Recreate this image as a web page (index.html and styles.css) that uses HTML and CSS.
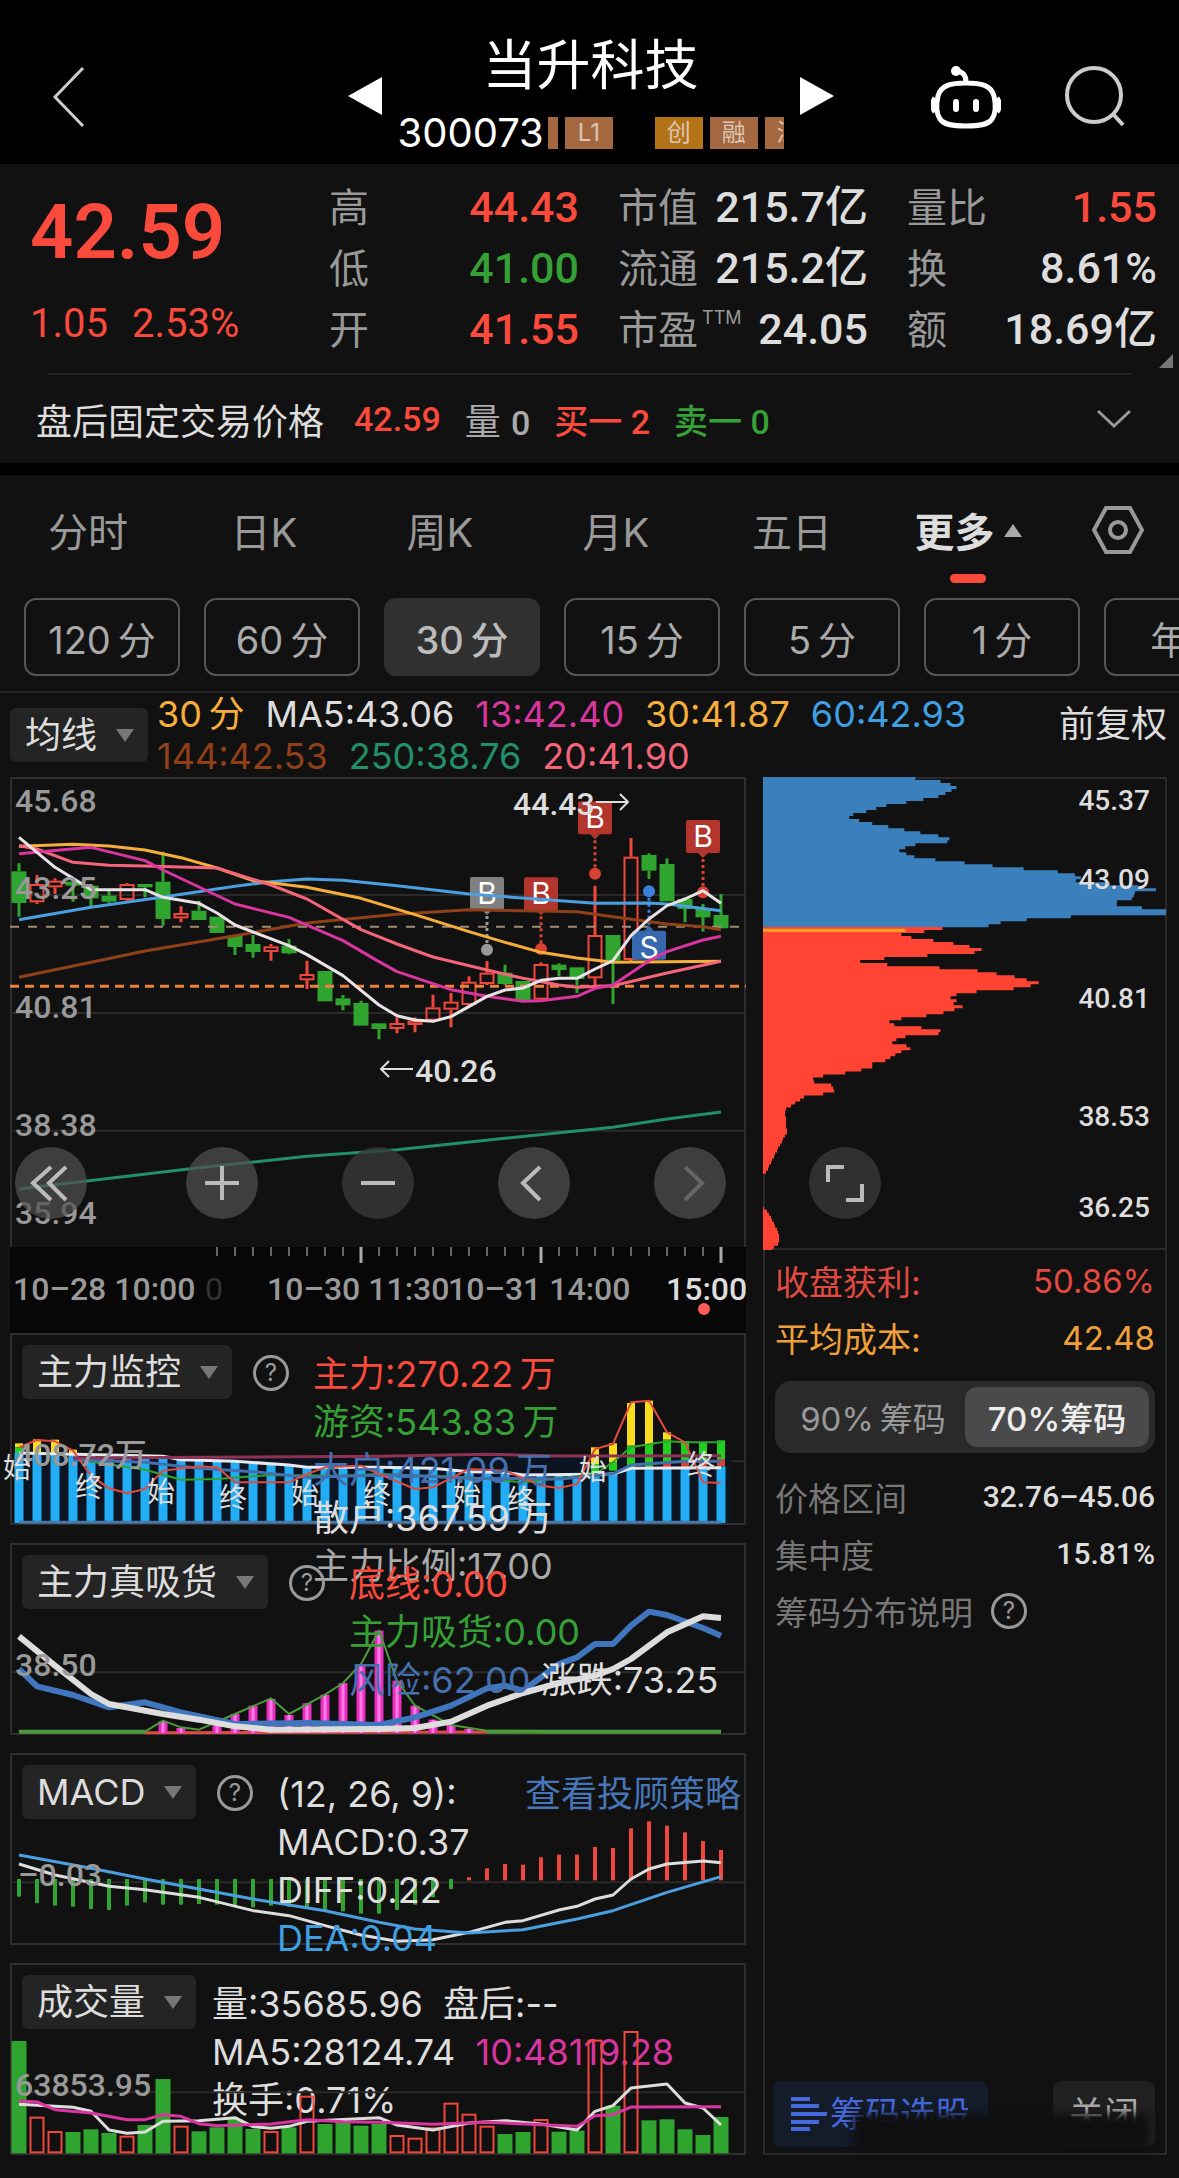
FILE: index.html
```html
<!DOCTYPE html>
<html lang="zh-CN">
<head>
    <meta charset="utf-8">
    <meta name="viewport" content="width=device-width, initial-scale=1">
    <title>当升科技 300073</title>
    <link rel="stylesheet" href="styles.css">
</head>
<body>
    <header class="topbar">
        <button class="icon-btn back" aria-label="返回">
            <svg width="36" height="64" viewBox="0 0 36 64"><path d="M31 3 3 32l28 29" /></svg>
        </button>
        <div class="stock">
            <button class="icon-btn" aria-label="上一只"><svg width="34" height="38" viewBox="0 0 34 38"><path class="solid" d="M34 0v38L0 19z" /></svg></button>
            <div class="stock-name">
                <h1>当升科技</h1>
                <div class="code">
                    <span>300073</span>
                    <div class="tags">
                        <i class="tag cut"></i><i class="tag">L1</i><i class="tag gold">创</i><i class="tag">融</i><i class="tag">深</i>
                    </div>
                </div>
            </div>
            <button class="icon-btn" aria-label="下一只"><svg width="34" height="38" viewBox="0 0 34 38"><path class="solid" d="M0 0v38l34-19z" /></svg></button>
        </div>
        <div class="tools">
            <button class="icon-btn" aria-label="助手">
                <svg width="70" height="66" viewBox="0 0 70 66">
                    <path class="thick" d="M35 19c15 0 25 2 28 13 2 9 2 17-2 23-4 6-13 7-26 7s-22-1-26-7c-4-6-4-14-2-23 3-11 13-13 28-13zM35 18c0-7-3-10-9-11" />
                    <circle class="solid" cx="25" cy="7" r="5" />
                    <path class="thick" d="M4 34c-3 4-3 10 0 14M66 34c3 4 3 10 0 14" />
                    <rect class="solid" x="22" y="35" width="6" height="13" rx="3" /><rect class="solid" x="42" y="35" width="6" height="13" rx="3" />
                </svg>
            </button>
            <button class="icon-btn" aria-label="搜索">
                <svg width="66" height="66" viewBox="0 0 66 66"><circle cx="31" cy="31" r="27" /><path d="m50 50 10 11" /></svg>
            </button>
        </div>
    </header>

    <section class="quote">
        <div class="stats">
            <div class="price red">
                <strong>42.59</strong>
                <p><span>1.05</span><span>2.53%</span></p>
            </div>
            <dl>
                <div><dt>高</dt><dd class="red">44.43</dd></div>
                <div><dt>低</dt><dd class="green">41.00</dd></div>
                <div><dt>开</dt><dd class="red">41.55</dd></div>
            </dl>
            <dl>
                <div><dt>市值</dt><dd>215.7亿</dd></div>
                <div><dt>流通</dt><dd>215.2亿</dd></div>
                <div><dt>市盈<sup>TTM</sup></dt><dd>24.05</dd></div>
            </dl>
            <dl>
                <div><dt>量比</dt><dd class="red">1.55</dd></div>
                <div><dt>换</dt><dd>8.61%</dd></div>
                <div><dt>额</dt><dd>18.69亿</dd></div>
            </dl>
        </div>
        <div class="after">
            <span>盘后固定交易价格</span>
            <b class="red">42.59</b>
            <span class="dim">量 <b>0</b></span>
            <b class="red">买一 2</b>
            <b class="green">卖一 0</b>
            <button class="icon-btn expand" aria-label="展开"><svg width="34" height="20" viewBox="0 0 34 20"><path d="m1 2 16 15L33 2" /></svg></button>
        </div>
    </section>

    <nav class="tabs">
        <button>分时</button>
        <button>日K</button>
        <button>周K</button>
        <button>月K</button>
        <button>五日</button>
        <button class="on">更多<i></i></button>
        <button aria-label="设置">
            <svg width="54" height="50" viewBox="0 0 54 50"><path d="M15 3h24l12 22-12 22H15L3 25z" /><circle cx="27" cy="25" r="8" /></svg>
        </button>
    </nav>
    <div class="periods">
        <button>120&thinsp;分</button>
        <button>60&thinsp;分</button>
        <button class="on">30&thinsp;分</button>
        <button>15&thinsp;分</button>
        <button>5&thinsp;分</button>
        <button>1&thinsp;分</button>
        <button>年K</button>
    </div>

    <div class="ma">
        <label class="pick"><select aria-label="主图指标"><option>均线</option></select></label>
        <div class="ma-values">
            <p><span class="c-yellow">30&thinsp;分</span><span>MA5:43.06</span><span class="c-pink">13:42.40</span><span class="c-yellow">30:41.87</span><span class="c-blue">60:42.93</span></p>
            <p><span class="c-brown">144:42.53</span><span class="c-teal">250:38.76</span><span class="c-rose">20:41.90</span></p>
        </div>
        <button class="adjust">前复权</button>
    </div>

    <main class="board">
        <div class="charts">
            <div class="kline">
                <svg id="kline" viewBox="0 0 736 470"></svg>
                <div class="controls">
                    <button aria-label="更早"><svg viewBox="0 0 72 72"><path d="M36 20 18 36l18 17M51 20 34 36l17 17" /></svg></button>
                    <button aria-label="放大"><svg viewBox="0 0 72 72"><path d="M19 36h34M36 19v34" /></svg></button>
                    <button class="faint" aria-label="缩小"><svg viewBox="0 0 72 72"><path d="M19 36h34" /></svg></button>
                    <button aria-label="左移"><svg viewBox="0 0 72 72"><path d="M42 20 25 36l17 17" /></svg></button>
                    <button class="off" aria-label="右移"><svg viewBox="0 0 72 72"><path d="m31 20 17 16-17 17" /></svg></button>
                </div>
            </div>
            <svg id="axis" class="axis" viewBox="0 0 736 86"></svg>

            <section class="panel">
                <svg id="monitor" viewBox="0 0 736 192"></svg>
                <div class="head">
                    <label class="pick"><select aria-label="副图一"><option>主力监控</option></select></label>
                    <button class="help" aria-label="说明">?</button>
                    <div class="legend">
                        <p class="red">主力:270.22&thinsp;万</p>
                        <p class="green">游资:543.83&thinsp;万</p>
                        <p class="c-navy">大户:421.09&thinsp;万</p>
                        <p>散户:367.59&thinsp;万</p>
                        <p class="dim">主力比例:17.00</p>
                    </div>
                </div>
            </section>
            <section class="panel">
                <svg id="absorb" viewBox="0 0 736 192"></svg>
                <div class="head">
                    <label class="pick"><select aria-label="副图二"><option>主力真吸货</option></select></label>
                    <button class="help" aria-label="说明">?</button>
                    <div class="legend">
                        <p class="red">底线:0.00</p>
                        <p class="green">主力吸货:0.00</p>
                        <p><span class="c-navy">风险:62.00</span> 涨跌:73.25</p>
                    </div>
                </div>
            </section>
            <section class="panel">
                <svg id="macd" viewBox="0 0 736 192"></svg>
                <div class="head">
                    <label class="pick"><select aria-label="副图三"><option>MACD</option></select></label>
                    <button class="help" aria-label="说明">?</button>
                    <div class="legend">
                        <p>(12, 26, 9):</p>
                        <p>MACD:0.37</p>
                        <p>DIFF:0.22</p>
                        <p class="c-blue">DEA:0.04</p>
                    </div>
                    <a class="strategy" href="#strategy">查看投顾策略</a>
                </div>
            </section>
            <section class="panel front">
                <svg id="volume" viewBox="0 0 736 192"></svg>
                <div class="head">
                    <label class="pick"><select aria-label="副图四"><option>成交量</option></select></label>
                    <div class="legend">
                        <p>量:35685.96&nbsp; 盘后:--</p>
                        <p>MA5:28124.74&nbsp; <span class="c-pink">10:48119.28</span></p>
                        <p>换手:0.71%</p>
                    </div>
                </div>
            </section>
        </div>

        <aside class="chips">
            <div class="chip-map">
                <svg id="chips" viewBox="0 0 403 472"></svg>
                <button class="zoom" aria-label="全屏"><svg viewBox="0 0 72 72"><path d="M19 35V20h16M37 53h16V37" /></svg></button>
            </div>
            <div class="chip-info">
                <p class="big red"><span>收盘获利:</span><span>50.86%</span></p>
                <p class="big c-orange"><span>平均成本:</span><span>42.48</span></p>
                <div class="segment">
                    <button>90%&thinsp;筹码</button>
                    <button class="on">70%筹码</button>
                </div>
                <p><span>价格区间</span><b>32.76–45.06</b></p>
                <p><span>集中度</span><b>15.81%</b></p>
                <p><span>筹码分布说明</span><button class="help" aria-label="说明">?</button></p>
            </div>
            <div class="chip-foot">
                <button class="pick-stock">
                    <svg width="36" height="34" viewBox="0 0 36 34"><path d="M0 2h19M0 9h28M0 17h36M0 25h28M0 32h19" /></svg>筹码选股
                </button>
                <button class="close">关闭</button>
                <div class="fade"></div>
            </div>
        </aside>
    </main>

    <script src="script.js"></script>
</body>
</html>
```

FILE: styles.css
```css
* {
    box-sizing: border-box;
    margin: 0;
    padding: 0;
}
body {
    background: #111;
    color: #ddd;
    font-family: Inter, "Noto Sans CJK SC", sans-serif;
    font-size: 36px;
    overflow-x: hidden;
}
button, select {
    font: inherit;
    color: inherit;
    background: none;
    border: 0;
    cursor: pointer;
}
svg {
    display: block;
    fill: none;
    stroke: currentColor;
    stroke-width: 3;
}
.red { color: #fa4a3c; }
.green { color: #35a035; }
.dim { color: #aaa; }
.c-yellow { color: #f5ae3c; }
.c-pink { color: #d9359f; }
.c-blue { color: #3f9fe0; }
.c-navy { color: #466fae; }
.c-brown { color: #8f4018; }
.c-teal { color: #219068; }
.c-rose { color: #f4647a; }
.c-orange { color: #f7a437; }

/* top bar */
.topbar {
    display: grid;
    grid-template-columns: 1fr auto 1fr;
    align-items: start;
    padding: 32px 50px 12px 52px;
    background: #000;
    color: #fff;
}
.icon-btn {
    display: flex;
}
.icon-btn .solid {
    fill: currentColor;
    stroke: none;
}
.icon-btn .thick {
    stroke-width: 5;
}
.back {
    margin-top: 33px;
    color: #ccc;
}
.stock {
    display: flex;
    align-items: center;
    gap: 16px;
}
.stock .icon-btn {
    padding-top: 8px;
}
.stock-name {
    width: 386px;
}
h1 {
    font-size: 54px;
    font-weight: 400;
    line-height: 68px;
    text-align: center;
}
.code {
    display: flex;
    align-items: center;
    gap: 4px;
    margin-top: 14px;
    font-size: 40px;
    line-height: 38px;
}
.tags {
    display: flex;
    flex: 1;
    gap: 7px;
    overflow: hidden;
}
.tag {
    flex: none;
    width: 48px;
    background: #a3683f;
    color: #ddc5b3;
    font-size: 24px;
    font-style: normal;
    line-height: 32px;
    text-align: center;
}
.tag.cut {
    width: 10px;
}
.tag.gold {
    margin-left: 35px;
    background: #b57318;
}
.tools {
    display: flex;
    justify-content: flex-end;
    gap: 62px;
    margin-top: 32px;
}
.tools button:last-child {
    color: #ccc;
}
.tools button:last-child svg {
    stroke-width: 4;
}

/* quote */
.quote {
    position: relative;
    border-bottom: 12px solid #000;
}
.quote::after {
    content: "";
    position: absolute;
    right: 6px;
    top: 190px;
    border-left: 14px solid transparent;
    border-bottom: 14px solid #777;
}
.stats {
    display: grid;
    grid-template-columns: 259fr 249fr 249fr 249fr;
    gap: 39px;
    padding: 13px 22px 13px 30px;
}
.price {
    font-family: Roboto, "Noto Sans CJK SC", sans-serif;
    font-size: 40px;
    line-height: 73px;
}
.price strong {
    display: block;
    font-size: 76px;
    font-weight: 600;
    line-height: 110px;
}
.price p {
    display: flex;
    gap: 24px;
}
dl > div {
    display: flex;
    justify-content: space-between;
    line-height: 61px;
    font-size: 40px;
    white-space: nowrap;
}
dt {
    color: #999;
}
dt sup {
    font-size: 18px;
    line-height: 18px;
    vertical-align: 20px;
    margin-left: 4px;
}
dd {
    font-family: Roboto, "Noto Sans CJK SC", sans-serif;
    font-size: 43px;
    font-weight: 500;
}
.after {
    display: flex;
    align-items: center;
    gap: 24px;
    height: 90px;
    margin: 0 48px;
    border-top: 2px solid #222;
    white-space: nowrap;
}
.after > span:first-child {
    margin: 0 6px 0 -12px;
}
.after b {
    font-family: Roboto, "Noto Sans CJK SC", sans-serif;
    font-weight: 500;
    font-size: 34px;
}
.expand {
    margin-left: auto;
    color: #999;
}

/* tabs */
.tabs {
    display: grid;
    grid-template-columns: repeat(6, 176fr) 123fr;
    height: 110px;
    font-size: 40px;
    color: #999;
}
.tabs button {
    position: relative;
    display: flex;
    align-items: center;
    justify-content: center;
}
.tabs svg {
    stroke-width: 4;
}
.tabs .on {
    color: #ddd;
    font-weight: 700;
}
.tabs i {
    margin-left: 9px;
    border: 9px solid transparent;
    border-top: 0;
    border-bottom: 13px solid #aaa;
}
.tabs .on::after {
    content: "";
    position: absolute;
    bottom: 2px;
    width: 36px;
    height: 9px;
    border-radius: 5px;
    background: #fa4a3c;
}
.periods {
    display: flex;
    gap: 24px;
    padding: 13px 0 15px 24px;
    overflow: hidden;
    border-bottom: 2px solid #222;
}
.periods button {
    flex: none;
    width: 156px;
    height: 78px;
    border: 2px solid #555;
    border-radius: 12px;
    color: #aaa;
    font-size: 38px;
}
.periods .on {
    border-color: #303030;
    background: #303030;
    color: #bbb;
    font-weight: 500;
}

/* main indicator row */
.ma {
    display: flex;
    align-items: center;
    height: 84px;
    padding: 0 12px 0 10px;
}
.ma-values {
    flex: 1;
    margin-left: 9px;
    line-height: 42px;
    white-space: nowrap;
}
.ma-values p {
    display: flex;
    gap: 21px;
}
.adjust {
    margin-bottom: 28px;
}
.pick {
    position: relative;
    flex: none;
    height: 54px;
    border-radius: 6px;
    background: #242424;
}
.pick select {
    appearance: none;
    height: 54px;
    padding: 0 50px 0 15px;
}
.pick::after {
    content: "";
    position: absolute;
    right: 14px;
    top: 21px;
    border: 9px solid transparent;
    border-top: 13px solid #777;
    border-bottom: 0;
    pointer-events: none;
}

/* charts */
.board {
    display: grid;
    grid-template-columns: 736fr 404fr;
    gap: 17px;
    padding: 0 12px 22px 10px;
}
.charts text, .chips text {
    stroke: none;
    fill: #ddd;
    font-family: Roboto, "Noto Sans CJK SC", sans-serif;
    font-size: 32px;
}
.charts svg .scale {
    fill: #999;
    font-weight: 500;
}
.charts svg .flag {
    fill: #fff;
    font-family: Inter, sans-serif;
    font-size: 30px;
    text-anchor: middle;
}
.charts svg .mark {
    font-size: 28px;
    text-anchor: middle;
}
.charts svg .strong {
    font-weight: 500;
}
.charts svg .ghost {
    fill: #333;
}
.kline, .panel, .chip-map {
    position: relative;
}
.kline {
    box-shadow: inset 0 2px #2e2e2e, inset 2px 0 #2e2e2e, inset -2px 0 #2e2e2e;
}
.axis {
    background: #070707;
}
.controls {
    position: absolute;
    left: 5px;
    top: 370px;
    display: flex;
    gap: 84px;
}
.controls button, .zoom {
    width: 72px;
    height: 72px;
    border-radius: 50%;
    background: rgba(80, 80, 80, .72);
    color: #bbb;
}
.controls svg, .zoom svg {
    stroke-width: 4;
}
.controls button:first-child {
    margin-right: 15px;
}
.controls .faint, .zoom {
    background: rgba(56, 56, 56, .8);
}
.controls .off {
    color: #666;
}
.panel {
    box-shadow: inset 0 0 0 2px #2e2e2e;
}
.panel + .panel {
    margin-top: 18px;
}
.panel > svg {
    position: relative;
    overflow: visible;
}
.panel.front > svg {
    z-index: 1;
    pointer-events: none;
}
.head {
    position: absolute;
    left: 12px;
    right: 5px;
    top: 12px;
    display: flex;
    align-items: flex-start;
    white-space: nowrap;
}
.help {
    flex: none;
    width: 36px;
    height: 36px;
    border: 3px solid #999;
    border-radius: 50%;
    color: #999;
    font-size: 24px;
    line-height: 30px;
}
.head .help {
    margin: 10px 24px 0 21px;
}
.legend {
    line-height: 48px;
    margin-top: 5px;
}
.pick + .legend {
    margin-left: 16px;
}
.strategy {
    margin: 5px 0 0 auto;
    color: #4676b8;
    line-height: 48px;
    text-decoration: none;
}

/* chip distribution */
.chips {
    display: flex;
    flex-direction: column;
    box-shadow: inset 0 0 0 2px #2a2a2a;
}
.chip-map {
    box-shadow: inset 0 -2px #2a2a2a;
}
.chips text {
    font-size: 28px;
    font-weight: 500;
    text-anchor: end;
}
.zoom {
    position: absolute;
    left: 46px;
    top: 370px;
}
.chip-info {
    padding: 2px 12px 0;
    color: #777;
    font-size: 33px;
}
.chip-info p {
    display: flex;
    align-items: center;
    justify-content: space-between;
    height: 57px;
}
.chip-info .big {
    font-size: 34px;
}
.chip-info .red { color: #e04a40; }
.chip-info .c-orange { color: #f0a03a; }
.chip-info .big span:last-child {
    font-size: 33px;
}
.chip-info p:last-child {
    justify-content: flex-start;
    gap: 18px;
}
.chip-info b {
    color: #ddd;
    font-family: Roboto, sans-serif;
    font-size: 30px;
    font-weight: 500;
}
.segment {
    display: grid;
    grid-template-columns: 1fr 1fr;
    height: 72px;
    margin: 15px 0;
    padding: 6px;
    border-radius: 16px;
    background: #2a2a2a;
    color: #999;
    font-size: 33px;
    white-space: nowrap;
}
.segment .on {
    border-radius: 12px;
    background: #4a4a4a;
    color: #eee;
    font-weight: 500;
}
.chip-foot {
    position: relative;
    display: flex;
    justify-content: space-between;
    margin-top: auto;
    padding: 0 12px 8px 10px;
}
.chip-foot button {
    display: flex;
    align-items: center;
    height: 66px;
    border-radius: 8px;
    font-size: 35px;
    line-height: 48px;
}
.pick-stock {
    gap: 3px;
    padding: 0 18px;
    background: #141b29;
    color: #4568dc;
}
.pick-stock svg {
    stroke-width: 4;
}
.close {
    padding: 0 16px;
    background: #202020;
    color: #aaa;
}
.fade {
    position: absolute;
    left: 90px;
    right: 18px;
    bottom: 5px;
    height: 36px;
    background: #0f0f10;
    filter: blur(4px);
}
```

FILE: script.js
```javascript
const NS = "http://www.w3.org/2000/svg";
const GREEN = "#2fa52f";
const RED = "#f0473c";

function add(svg, tag, attrs, text) {
    const el = document.createElementNS(NS, tag);
    for (const key in attrs) el.setAttribute(key, attrs[key]);
    if (text) el.textContent = text;
    svg.appendChild(el);
    return el;
}

// one slot every 18px, plot heights are on a 3x grid
const x = i => 9 + 18 * i;
const grid = top => v => (v - top) / 3;

function line(svg, y, pts, color, width) {
    const d = pts.map(p => x(p[0]) + "," + y(p[1])).join(" ");
    add(svg, "polyline", { points: d, stroke: color, "stroke-width": width || 2, "stroke-linejoin": "round" });
}

function bar(svg, i, top, bottom, width, color, hollow) {
    const w = hollow ? width - 2 : width;
    add(svg, "rect", {
        x: x(i) - w / 2, y: hollow ? top + 1 : top, width: w,
        height: Math.max(bottom - top - (hollow ? 2 : 0), 2),
        fill: hollow ? "none" : color, stroke: hollow ? color : "none", "stroke-width": 2
    });
}

function rule(svg, y, attrs) {
    add(svg, "path", Object.assign({ d: "M0 " + y + "H736", stroke: "#2a2a2a", "stroke-width": 2 }, attrs));
}

// ---- candles: [up, high, top, bottom, low]
const candles = [
    [0, 283, 307, 402, 443], [1, 318, 345, 400, 405], [1, 328, 335, 355, 375], [0, 330, 338, 350, 398],
    [0, 345, 350, 388, 415], [0, 360, 380, 398, 403], [1, 342, 345, 393, 395], [0, 345, 345, 355, 385],
    [0, 248, 338, 450, 470], [1, 412, 432, 448, 460], [0, 395, 425, 453, 453], [0, 443, 443, 492, 492],
    [0, 500, 500, 534, 558], [0, 498, 525, 549, 566], [1, 525, 532, 549, 575], [0, 510, 530, 553, 556],
    [1, 575, 615, 634, 660], [0, 606, 606, 697, 697], [0, 678, 688, 709, 724], [0, 695, 702, 770, 770],
    [0, 763, 763, 780, 811], [1, 745, 762, 780, 793], [1, 745, 755, 768, 790], [1, 677, 715, 755, 760],
    [1, 672, 698, 722, 775], [1, 622, 638, 708, 712], [1, 576, 611, 645, 648], [0, 587, 611, 645, 648],
    [0, 636, 636, 695, 697], [1, 580, 585, 692, 695], [0, 583, 587, 603, 622], [0, 595, 595, 630, 672],
    [1, 350, 498, 628, 655], [0, 498, 498, 575, 705], [1, 207, 263, 573, 577], [0, 253, 258, 305, 330],
    [0, 268, 285, 397, 397], [0, 385, 390, 420, 460], [0, 405, 420, 445, 488], [0, 375, 438, 478, 478]
];

function drawKline() {
    const svg = document.getElementById("kline");
    const y = grid(24);
    [378, 732, 1085].forEach(v => rule(svg, y(v)));
    candles.forEach((c, i) => {
        const color = c[0] ? RED : GREEN;
        add(svg, "path", { d: `M${x(i)} ${y(c[1])}V${y(c[2])}M${x(i)} ${y(c[3])}V${y(c[4])}`, stroke: color });
        bar(svg, i, y(c[2]), y(c[3]), 15, color, c[0]);
    });
    rule(svg, y(473), { stroke: "#a08c70", "stroke-dasharray": "9 9" });
    rule(svg, y(652), { stroke: "#ee8040", "stroke-width": 3, "stroke-dasharray": "9 6" });

    flag(svg, y, 26, 324, 542, "B", "#808080");
    flag(svg, y, 29, 325, 540, "B", "#b3352b");
    flag(svg, y, 32, 97, 314, "B", "#b3352b");
    flag(svg, y, 38, 153, 370, "B", "#b3352b");
    flag(svg, y, 35, 485, 367, "S", "#3568ae");

    line(svg, y, [[0, 1260], [10, 1196], [16, 1162], [21, 1142], [27, 1108], [33, 1075], [36, 1050], [39, 1029]], "#219068", 3);
    line(svg, y, [[0, 625], [7, 546], [12, 500], [16, 462], [21, 436], [25, 422], [31, 428], [33, 443], [36, 465], [38, 473], [39, 482]], "#8f4018", 3);
    line(svg, y, [[0, 452], [4, 415], [8, 384], [12, 352], [14, 338], [16, 330], [18, 334], [21, 350], [25, 375], [32, 403], [35, 402], [36, 405], [39, 425]], "#4a9fe0", 3);
    line(svg, y, [[0, 232], [3, 226], [5, 231], [7, 243], [9, 266], [11, 297], [13, 335], [16, 355], [19, 388], [22, 437], [25, 488], [27, 520], [29, 550], [31, 567], [33, 580], [39, 577]], "#f5ae3c", 3);
    line(svg, y, [[0, 230], [1, 240], [3, 280], [5, 289], [7, 291], [11, 297], [14, 348], [16, 390], [19, 482], [21, 525], [23, 564], [26, 603], [28, 628], [30, 648], [31, 655], [33, 650], [36, 612], [39, 577]], "#f4647a", 3);
    line(svg, y, [[0, 254], [4, 235], [7, 275], [8, 303], [12, 405], [15, 445], [18, 515], [20, 578], [21, 608], [24, 662], [26, 682], [28, 697], [29, 695], [31, 682], [32, 658], [33, 648], [35, 575], [36, 548], [38, 513], [39, 502]], "#d9359f", 3);
    line(svg, y, [[0, 205], [1, 250], [2, 295], [3, 328], [4, 362], [7, 362], [8, 385], [10, 403], [11, 432], [12, 468], [15, 530], [16, 557], [18, 620], [20, 708], [21, 740], [22, 753], [23, 757], [24, 743], [26, 682], [27, 663], [28, 657], [29, 634], [30, 628], [31, 628], [32, 600], [33, 575], [34, 500], [35, 450], [36, 410], [37, 390], [38, 365], [39, 403]], "#e8e2e6", 3);

    [["45.68", 35], ["43.25", 122], ["40.81", 241], ["38.38", 359], ["35.94", 447]].forEach(t =>
        add(svg, "text", { x: 5, y: t[1], class: "scale" }, t[0]));
    add(svg, "text", { x: 503, y: 38, class: "strong" }, "44.43");
    add(svg, "path", { d: "M586 25h32M610 17l8 8-8 8", stroke: "#ddd", "stroke-width": 2 });
    add(svg, "text", { x: 405, y: 305, class: "strong" }, "40.26");
    add(svg, "path", { d: "M403 292h-32M379 284l-8 8 8 8", stroke: "#ddd", "stroke-width": 2 });
}

function flag(svg, y, i, top, dot, text, color) {
    const t = y(top), d = y(dot), cx = x(i);
    const bright = color === "#b3352b" ? "#d8402f" : color === "#808080" ? "#999" : "#3c80dd";
    const from = d > t ? t + 33 : t;
    add(svg, "path", { d: `M${cx} ${from}V${d}`, stroke: bright, "stroke-dasharray": "3 3" });
    add(svg, "circle", { cx: cx, cy: d, r: 6, fill: bright, stroke: "none" });
    add(svg, "rect", { x: cx - 17, y: t, width: 34, height: d > t ? 33 : 29, rx: 2, fill: color, stroke: "none" });
    const tip = d > t ? `M${cx - 5} ${t + 33}h10l-5 5z` : `M${cx - 5} ${t}h10l-5-5z`;
    add(svg, "path", { d: tip, fill: color, stroke: "none" });
    add(svg, "text", { x: cx, y: t + 27, class: "flag" }, text);
}

function drawAxis() {
    const svg = document.getElementById("axis");
    for (let i = 11; i < 40; i++) {
        const major = i % 10 === 9;
        add(svg, "path", { d: `M${x(i)} 0V${major ? 16 : 9}`, stroke: major ? "#aaa" : "#666", "stroke-width": major ? 3 : 2 });
    }
    add(svg, "text", { x: 195, y: 53, class: "ghost" }, "0");
    add(svg, "text", { x: 3, y: 53, class: "scale" }, "10–28 10:00");
    add(svg, "text", { x: 257, y: 53, class: "scale" }, "10–30 11:30");
    add(svg, "text", { x: 438, y: 53, class: "scale" }, "10–31 14:00");
    add(svg, "text", { x: 656, y: 53, class: "strong" }, "15:00");
    add(svg, "circle", { cx: 694, cy: 62, r: 6, fill: "#ff5a55", stroke: "none" });
}

function drawMonitor() {
    const svg = document.getElementById("monitor");
    const y = grid(312);
    rule(svg, y(697));
    const body = [672, 674, 672, 674, 676, 677, 679, 680, 682, 692, 694, 696, 697, 700, 704, 708, 715, 715, 715, 715, 715, 716, 717, 718, 723, 728, 729, 730, 738, 738, 737, 736, 735, 730, 716, 714, 714, 714, 714, 712];
    add(svg, "rect", { x: 5, y: 124, width: 716, height: 66, fill: "#0b1420", stroke: "none" });
    body.forEach((v, i) => bar(svg, i, y(v), y(882), 9, "#21adf5"));
    const caps = [
        [0, 643, 655, "#fadc1e"], [0, 655, 672, "#1fd01f"], [1, 631, 672, "#fadc1e"], [2, 632, 672, "#fadc1e"], [3, 662, 674, "#fadc1e"],
        [32, 655, 705, "#fadc1e"], [32, 705, 735, "#1fd01f"], [33, 643, 700, "#fadc1e"], [33, 700, 725, "#1fd01f"],
        [34, 522, 650, "#fadc1e"], [34, 650, 716, "#1fd01f"], [35, 515, 645, "#fadc1e"], [35, 645, 716, "#1fd01f"],
        [36, 610, 632, "#fadc1e"], [36, 632, 700, "#1fd01f"], [37, 636, 700, "#1fd01f"], [38, 640, 700, "#1fd01f"], [39, 634, 690, "#1fd01f"],
        [36, 700, 716, "#d8402f"], [37, 700, 716, "#d8402f"], [38, 695, 714, "#d8402f"], [39, 690, 712, "#d8402f"]
    ];
    caps.forEach(c => bar(svg, c[0], y(c[1]), y(c[2]), 8, c[3]));
    line(svg, y, [[0, 880], [39, 880]], "#4a78a8", 3);
    line(svg, y, [[0, 672], [8, 682], [9, 692], [12, 697], [15, 708], [16, 715], [20, 715], [23, 718], [25, 728], [27, 730], [28, 738], [33, 735], [34, 718], [39, 716]], "#e8e8f0", 3);
    line(svg, y, [[3, 690], [7, 722], [9, 752], [11, 750], [14, 738], [18, 740], [20, 735], [25, 745], [28, 760], [30, 748], [32, 735], [33, 700], [34, 655], [36, 637], [37, 640], [39, 640]], GREEN, 2);
    line(svg, y, [[3, 692], [7, 700], [10, 718], [13, 728], [16, 745], [19, 740], [21, 738], [25, 748], [30, 750], [33, 735], [34, 708], [37, 697], [39, 697]], "#466fae", 3);
    line(svg, y, [[0, 655], [1, 633], [2, 637], [3, 665], [4, 740], [5, 778], [6, 793], [7, 780], [8, 725], [10, 712], [11, 715], [12, 760], [15, 760], [16, 735], [17, 715], [19, 710], [20, 735], [22, 780], [23, 775], [25, 720], [27, 725], [29, 770], [30, 777], [31, 765], [32, 660], [33, 645], [34, 520], [35, 515], [36, 610], [37, 640], [38, 760], [39, 762]], "#e04a40", 2);
    line(svg, y, [[3, 687], [20, 682], [26, 676], [30, 681], [39, 680]], "#8f3055", 3);
    add(svg, "text", { x: 5, y: 133, class: "scale" }, "408.72万");
    [["始", 0, 748], ["终", 4, 805], ["始", 8, 820], ["终", 12, 838], ["始", 16, 826], ["终", 20, 826], ["始", 25, 826], ["终", 28, 842], ["始", 32, 752], ["终", 38, 738]].forEach(m =>
        add(svg, "text", { x: x(m[1]) - 2, y: y(m[2]), class: "mark" }, m[0]));
}

function drawAbsorb() {
    const svg = document.getElementById("absorb");
    const y = grid(42);
    rule(svg, y(430));
    line(svg, y, [[7, 611], [26, 609]], "#e04a40", 3);
    [[8, 578], [9, 597], [11, 585], [12, 555], [13, 530], [14, 510], [15, 558], [16, 523], [17, 497], [18, 462], [19, 405], [20, 305], [21, 455], [22, 530], [23, 572], [24, 588], [25, 600]].forEach(b => {
        bar(svg, b[0], y(b[1]), y(612), 9, "#e62fc0");
        bar(svg, b[0], y(b[1]), y(612), 3, "#ff78e6");
    });
    line(svg, y, [[0, 608], [7, 608], [8, 575], [9, 595], [10, 602], [12, 555], [14, 508], [15, 555], [17, 497], [18, 462], [19, 405], [20, 305], [21, 455], [22, 530], [24, 588], [26, 605], [39, 608]], "#4a9a3c", 2);
    line(svg, y, [[0, 608], [7, 608]], "#4a9a3c", 4);
    line(svg, y, [[26, 608], [39, 608]], "#4a9a3c", 4);
    line(svg, y, [[0, 420], [1, 472], [3, 498], [5, 535], [7, 520], [9, 550], [12, 585], [16, 582], [20, 588], [22, 565], [24, 530], [26, 478], [27, 470], [28, 485], [30, 405], [31, 385], [32, 345], [33, 345], [34, 290], [35, 248], [36, 258], [38, 297], [39, 320]], "#3f76bd", 6);
    line(svg, y, [[0, 322], [2, 410], [4, 495], [5, 525], [8, 555], [10, 572], [12, 592], [14, 602], [20, 600], [22, 597], [24, 578], [26, 530], [28, 492], [30, 462], [32, 440], [33, 420], [34, 390], [36, 310], [38, 262], [39, 267]], "#ddd", 6);
    add(svg, "text", { x: 5, y: 133, class: "scale" }, "38.50");
}

function drawMacd() {
    const svg = document.getElementById("macd");
    const y = grid(42);
    rule(svg, y(430));
    [473, 492, 500, 503, 510, 513, 500, 490, 497, 497, 495, 497, 503, 505, 500, 503, 510, 513, 517, 524, 524, 513, 497, 475, 450].forEach((v, i) =>
        bar(svg, i, y(420), y(v), 4, GREEN));
    [415, 388, 375, 377, 355, 347, 347, 324, 327, 268, 247, 260, 280, 306, 333].forEach((v, i) =>
        bar(svg, i + 25, y(v), y(424), 4, RED));
    line(svg, y, [[0, 375], [2, 408], [5, 442], [7, 452], [10, 475], [13, 515], [15, 530], [17, 560], [19, 588], [21, 607], [23, 602], [25, 580], [27, 550], [28, 545], [30, 513], [31, 502], [32, 480], [33, 468], [34, 420], [35, 390], [36, 375], [38, 366], [39, 371]], "#ddd", 3);
    line(svg, y, [[0, 348], [4, 388], [7, 420], [13, 480], [17, 515], [20, 550], [22, 570], [25, 582], [28, 572], [31, 540], [33, 515], [36, 460], [39, 413]], "#4a9fe0", 3);
    add(svg, "text", { x: 8, y: 133, class: "scale" }, "–0.03");
}

// positive = up (hollow), negative = down
const volumes = [-276, 503, 546, -549, -541, -552, 560, -528, -390, 530, -547, -535, -510, -540, 546, -535, 440, -525, -510, -530,
    -525, 558, 566, 535, 461, 494, 530, -555, -549, 510, -548, -545, 272, -470, 246, -514, -511, -541, -558, -504];

function drawVolume() {
    const svg = document.getElementById("volume");
    const y = grid(42);
    rule(svg, y(430));
    volumes.forEach((v, i) => bar(svg, i, y(Math.abs(v)), y(613), 15, v > 0 ? RED : GREEN, v > 0));
    line(svg, y, [[0, 466], [3, 475], [4, 487], [5, 543], [6, 553], [7, 549], [8, 517], [10, 515], [12, 506], [13, 533], [14, 538], [15, 532], [16, 517], [20, 506], [21, 528], [23, 543], [25, 522], [27, 515], [29, 525], [31, 543], [32, 487], [33, 470], [34, 417], [36, 405], [37, 462], [38, 477], [39, 528]], "#ddd", 3);
    line(svg, y, [[0, 456], [1, 459], [2, 482], [4, 492], [6, 512], [7, 512], [8, 497], [9, 502], [10, 524], [11, 530], [14, 525], [16, 512], [18, 518], [20, 520], [23, 526], [26, 520], [31, 532], [32, 500], [33, 497], [34, 474], [39, 473]], "#d9359f", 3);
    add(svg, "text", { x: 5, y: 133, class: "scale" }, "63853.95");
}

// ---- chip distribution: [level, width]
const above = [[24, 500], [33, 575], [48, 627], [60, 610], [78, 570], [92, 500], [105, 415], [120, 365], [138, 292], [155, 350], [170, 430], [185, 510], [200, 600], [212, 607], [222, 500], [238, 450], [250, 475], [262, 510], [275, 640], [290, 780], [305, 950], [318, 1000], [330, 980], [345, 1150], [357, 1222], [368, 1145], [380, 1160], [388, 1140], [398, 1070], [410, 1170], [420, 1250], [429, 1250], [432, 1065], [445, 850], [458, 740], [473, 700]];
const below = [[473, 582], [480, 582], [484, 472], [495, 450], [515, 600], [535, 703], [548, 670], [558, 450], [572, 335], [580, 400], [595, 660], [615, 790], [635, 870], [650, 830], [662, 685], [675, 598], [690, 625], [698, 615], [708, 645], [722, 600], [735, 530], [745, 440], [758, 410], [770, 520], [775, 578], [790, 570], [797, 470], [813, 422], [822, 470], [832, 490], [845, 450], [870, 410], [875, 373], [890, 370], [905, 290], [918, 195], [932, 197], [940, 250], [965, 262], [972, 173], [990, 150], [1015, 110], [1085, 117], [1100, 108], [1150, 80], [1205, 53], [1210, 45], [1305, 45], [1320, 58], [1350, 75], [1385, 92], [1415, 95], [1425, 80], [1438, 72]];

function steps(svg, pts, color) {
    let d = `M0 ${(pts[0][0] - 24) / 3}`;
    let k = 0;
    for (let v = pts[0][0]; v < pts[pts.length - 1][0]; v += 9) {
        while (pts[k + 1][0] < v) k++;
        const a = pts[k], b = pts[k + 1];
        const w = a[1] + (b[1] - a[1]) * (v - a[0]) / (b[0] - a[0]);
        d += `H${Math.round((w - 45) / 3)}V${(v + 9 - 24) / 3}`;
    }
    add(svg, "path", { d: d + "H0z", fill: color, stroke: "none" });
}

function drawChips() {
    const svg = document.getElementById("chips");
    steps(svg, above, "#3a80bc");
    steps(svg, below, "#ff4433");
    add(svg, "path", { d: "M0 153H142", stroke: "#ff9c20", "stroke-width": 3 });
    [["45.37", 33], ["43.09", 112], ["40.81", 230], ["38.53", 348], ["36.25", 439]].forEach(t =>
        add(svg, "text", { x: 386, y: t[1] }, t[0]));
}

drawKline();
drawAxis();
drawMonitor();
drawAbsorb();
drawMacd();
drawVolume();
drawChips();
```
